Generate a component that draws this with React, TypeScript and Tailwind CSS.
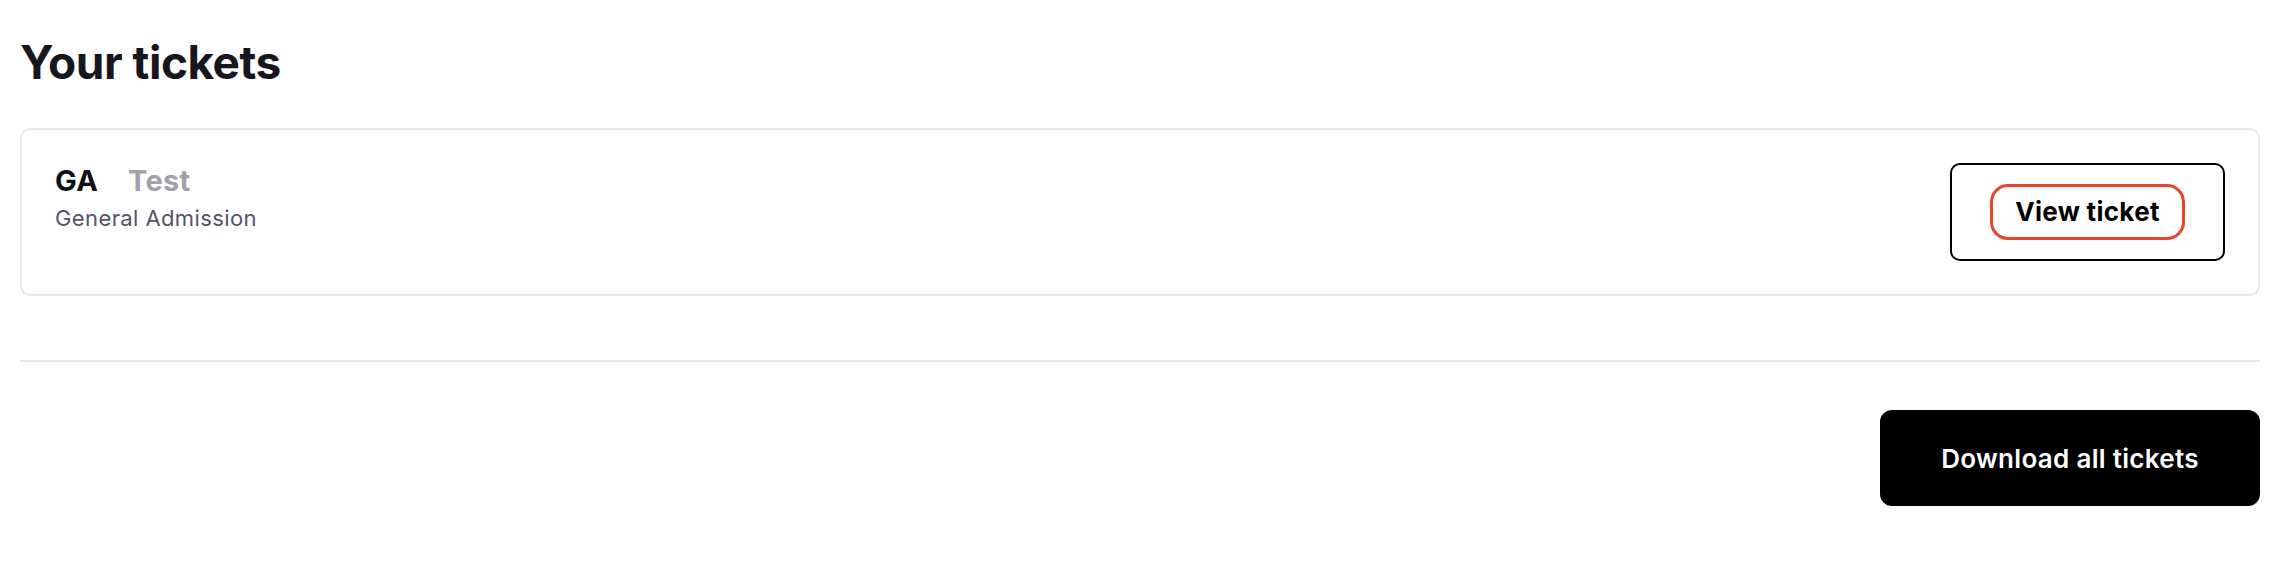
export default function App() {
  return (
    <div
      className="w-[2290px] h-[580px] bg-white pl-[20px] pr-[30px]"
      style={{ fontFamily: "Inter, 'Noto Sans', sans-serif" }}
    >
      <h1 className="pt-[34px] text-[46px] leading-[56px] font-bold text-[#17161d] tracking-[-0.5px]">
        Your tickets
      </h1>

      {/* Ticket card */}
      <div className="mt-[38px] flex items-start justify-between rounded-[10px] border-2 border-[#e6e6eb] p-[33px]">
        <div className="flex flex-col">
          <div className="flex items-baseline gap-[30px] text-[29px] leading-[36px] font-bold tracking-[0.3px]">
            <span className="text-[#111015]">GA</span>
            <span className="text-[#a2a1aa]">Test</span>
          </div>
          <p className="mt-[5px] text-[22px] leading-[28px] tracking-[0.4px] text-[#55546a]">
            General Admission
          </p>
        </div>
        <button className="flex h-[98px] w-[275px] items-center justify-center rounded-[10px] border-2 border-black bg-white">
          <span className="rounded-[18px] border-[3px] border-[#e8452c] px-[22px] py-[8px] text-[26px] leading-[34px] font-bold tracking-[0.3px] text-black">
            View ticket
          </span>
        </button>
      </div>

      <hr className="mt-[64px] border-t-2 border-[#e6e6eb]" />

      <div className="mt-[48px] flex justify-end">
        <button className="h-[96px] w-[380px] rounded-[12px] bg-black text-[26px] font-semibold tracking-[0.3px] text-white">
          Download all tickets
        </button>
      </div>
    </div>
  );
}
